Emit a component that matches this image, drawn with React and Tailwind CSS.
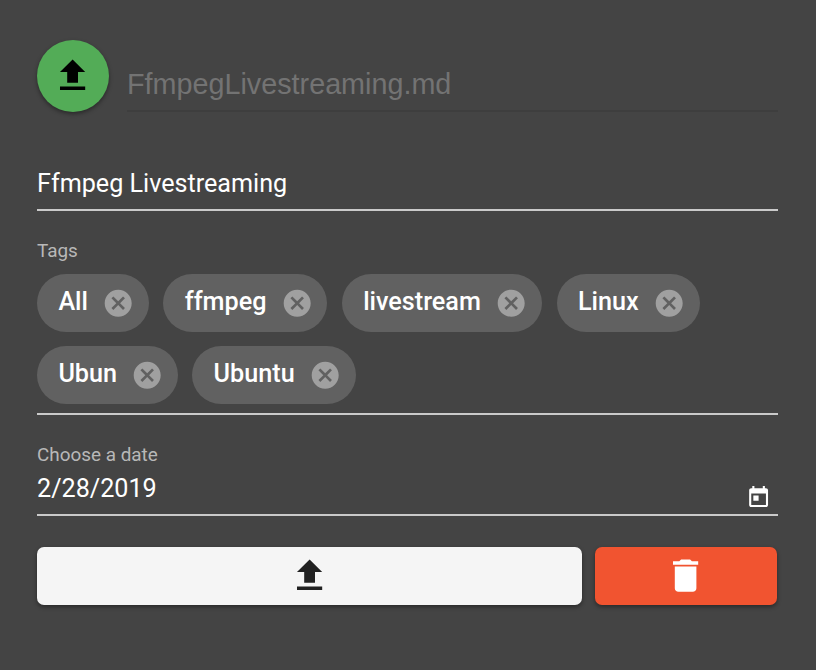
const up = 'M9 16h6v-6h4l-7-7-7 7h4zm-4 2h14v2H5z';
const cancel = 'M12 2C6.47 2 2 6.47 2 12s4.47 10 10 10 10-4.47 10-10S17.53 2 12 2zm5 13.59L15.59 17 12 13.41 8.41 17 7 15.59 10.59 12 7 8.41 8.41 7 12 10.59 15.59 7 17 8.41 13.41 12 17 15.59z';
const trash = 'M6 19c0 1.100.9 2 2 2h8c1.100 0 2-.9 2-2V7H6v12zM19 4h-3.500l-1-1h-5l-1 1H5v2h14V4z';
const calendar = 'M19 3h-1V1h-2v2H8V1H6v2H5c-1.110 0-1.990.9-1.990 2L3 19c0 1.100.89 2 2 2h14c1.100 0 2-.9 2-2V5c0-1.100-.9-2-2-2zm0 16H5V8h14v11zM7 10h5v5H7z';

function Icon({ d, className }) {
  return (
    <svg viewBox="0 0 24 24" fill="currentColor" className={className}>
      <path d={d} />
    </svg>
  );
}

function Chip({ label, width }) {
  return (
    <div className={`flex h-[58px] items-center justify-between rounded-full bg-[#616161] pr-[14.500px] pl-[21.400px] text-white ${width}`}>
      <span className="pb-[3px] text-[25.200px] leading-7 font-medium whitespace-nowrap">{label}</span>
      <Icon d={cancel} className="mb-[0.500px] h-[32.400px] w-[32.400px] shrink-0 text-[#a0a0a0]" />
    </div>
  );
}

export default function App() {
  return (
    <main className="h-[670px] w-[816px] overflow-hidden bg-[#444444] pt-10 pr-[38px] pl-[37px] font-['Roboto',sans-serif] text-white">
      <header className="flex h-[72px]">
        <button className="flex h-[72px] w-[72px] shrink-0 items-center justify-center rounded-full bg-[#53ac57] pr-px text-black shadow-[0_2px_4px_rgba(0,0,0,0.4)]">
          <Icon d={up} className="h-[43.200px] w-[43.200px]" />
        </button>
        <div className="ml-[18px] h-[72px] flex-1 border-b-2 border-[#3e3e3e] pt-[28px] font-['Liberation_Sans',sans-serif] text-[28.750px] leading-8 text-[#737373]">
          FfmpegLivestreaming.md
        </div>
      </header>
      <div className="mt-[46px] h-[53px] border-b-2 border-[#cacaca] pt-[10px] text-[25.150px] leading-8">Ffmpeg Livestreaming</div>
      <section className="h-[204px] border-b-2 border-[#cacaca] pt-[28px]">
        <div className="text-[18.900px] leading-6 text-[#b8b8b8]">Tags</div>
        <div className="mt-[11px] flex gap-[14.400px]">
          <Chip label="All" width="w-[112px]" />
          <Chip label="ffmpeg" width="w-[164px]" />
          <Chip label="livestream" width="w-[200.400px]" />
          <Chip label="Linux" width="w-[143.400px]" />
        </div>
        <div className="mt-[14px] flex gap-[14px]">
          <Chip label="Ubun" width="w-[141.200px]" />
          <Chip label="Ubuntu" width="w-[164px]" />
        </div>
      </section>
      <section className="h-[101px] border-b-2 border-[#cacaca] pt-[28px]">
        <div className="text-[18.900px] leading-6 text-[#b8b8b8]">Choose a date</div>
        <div className="flex items-start justify-between pr-[6.500px]">
          <span className="pt-[6px] text-[25.150px] leading-8">2/28/2019</span>
          <Icon d={calendar} className="mt-[18px] h-[25.200px] w-[25.200px]" />
        </div>
      </section>
      <div className="mt-[31px] flex gap-[13px]">
        <button className="flex h-[58px] w-[545px] items-center justify-center rounded-[7px] bg-[#f5f5f5] pb-px text-[#212121] shadow-[0_2px_4px_rgba(0,0,0,0.4)]">
          <Icon d={up} className="h-[43.200px] w-[43.200px]" />
        </button>
        <button className="flex h-[58px] w-[182px] items-center justify-center rounded-[7px] bg-[#f15430] pb-px text-white shadow-[0_2px_4px_rgba(0,0,0,0.4)]">
          <Icon d={trash} className="h-[43.200px] w-[43.200px]" />
        </button>
      </div>
    </main>
  );
}
